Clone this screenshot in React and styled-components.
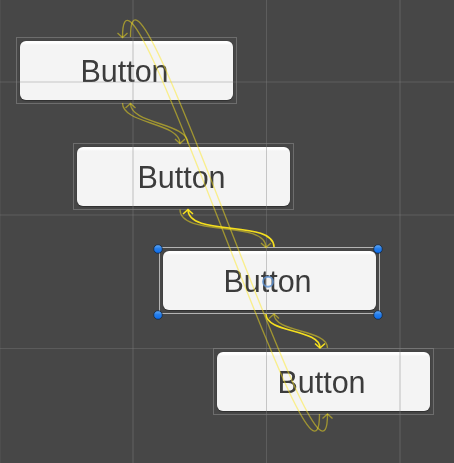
import React from "react";
import styled, { createGlobalStyle } from "styled-components";

const GlobalStyle = createGlobalStyle`
  html, body { margin: 0; background: #474747; overflow: hidden; }
`;

const Scene = styled.main`
  position: relative;
  width: 454px;
  height: 463px;
  overflow: hidden;
  background: #474747;
`;

const Node = styled.div`
  position: absolute;
  left: ${(p) => p.$x}px;
  top: ${(p) => p.$y}px;
  box-sizing: border-box;
  width: 221px;
  height: 67px;
  padding: 3px;
  display: flex;
  border: 1px solid ${(p) => (p.$selected ? "#b4b4b4" : "#6d6d6d")};
`;

const UiButton = styled.button`
  flex: 1;
  margin: 0;
  padding: 1px 4px 0 0;
  border: 0;
  border-radius: 6px;
  background: linear-gradient(#ffffff 0 2px, #f4f4f4 4px);
  box-shadow: 0 1px 1px #303030, 0 0 1px #303030;
  display: flex;
  align-items: center;
  justify-content: center;
`;

const Label = styled.span`
  font: 30.5px/34px "Liberation Sans", Arial, sans-serif;
  color: #3c3c3c;
  filter: blur(0.65px);
`;

const Overlay = styled.svg`
  position: absolute;
  inset: 0;
  pointer-events: none;
`;

const nodes = [
  { x: 16, y: 37 },
  { x: 73, y: 143 },
  { x: 159, y: 247, selected: true },
  { x: 213, y: 348 },
];

const gridLines = [
  { x: 0, y: 0, w: 1, h: 463, o: 0.12 },
  { x: 132, y: 0, w: 2, h: 463, o: 0.23 },
  { x: 266, y: 0, w: 1, h: 463, o: 0.4 },
  { x: 399, y: 0, w: 2, h: 463, o: 0.23 },
  { x: 0, y: 81, w: 454, h: 2, o: 0.2 },
  { x: 0, y: 214, w: 454, h: 2, o: 0.2 },
  { x: 0, y: 348, w: 454, h: 1, o: 0.35 },
];

// Each link leaves and enters vertically; dir is the heading of the start (1 = down).
const links = [
  { from: [122.5, 103], to: [180, 143.5], dir: 1 },
  { from: [188, 143.5], to: [130.5, 103.5], dir: -1 },
  { from: [180, 209.5], to: [266, 247.5], dir: 1 },
  { from: [327.5, 348], to: [274, 314], dir: -1 },
  { from: [319.5, 414], to: [122.5, 37.5], dir: 1 },
  { from: [130.5, 37], to: [327.5, 414], dir: -1 },
  { from: [274, 247], to: [188, 209.5], dir: -1, active: true },
  { from: [266, 314], to: [320, 348], dir: 1, active: true },
];

const handles = [[158, 249], [378, 249], [158, 315], [378, 315]];

function Link({ from, to, dir, active }) {
  const [x1, y1] = from;
  const [x2, y2] = to;
  const reach = Math.hypot(x2 - x1, y2 - y1) * 0.3 * dir;
  const tip = -4.5 * dir;
  return (
    <g
      fill="none"
      stroke="#ffe81c"
      strokeWidth={active ? 1.6 : 1.35}
      strokeOpacity={active ? 0.95 : 0.48}
    >
      <path d={`M${x1} ${y1}C${x1} ${y1 + reach} ${x2} ${y2 - reach} ${x2} ${y2}`} />
      <path d={`M${x2 - 5} ${y2 + tip}L${x2} ${y2}L${x2 + 5} ${y2 + tip}`} />
    </g>
  );
}

export default function App() {
  return (
    <>
      <GlobalStyle />
      <Scene>
        {nodes.map((n, i) => (
          <Node key={i} $x={n.x} $y={n.y} $selected={n.selected}>
            <UiButton><Label>Button</Label></UiButton>
          </Node>
        ))}
        <Overlay width="454" height="463" viewBox="0 0 454 463">
          <defs>
            <linearGradient id="handle" x2="0" y2="1">
              <stop stopColor="#65adfb" />
              <stop offset=".45" stopColor="#287fe9" />
              <stop offset="1" stopColor="#086cf2" />
            </linearGradient>
          </defs>
          {gridLines.map((g, i) => (
            <rect key={i} x={g.x} y={g.y} width={g.w} height={g.h} fill="#808080" fillOpacity={g.o} />
          ))}
          {links.map((l, i) => <Link key={i} {...l} />)}
          <circle cx="268" cy="281.7" r="5" fill="none" stroke="#6093d3" strokeOpacity=".8" strokeWidth="1.9" />
          {handles.map(([x, y]) => (
            <circle key={`${x}-${y}`} cx={x} cy={y} r="4.3" fill="url(#handle)" stroke="#182c46" strokeWidth="0.9" />
          ))}
        </Overlay>
      </Scene>
    </>
  );
}
